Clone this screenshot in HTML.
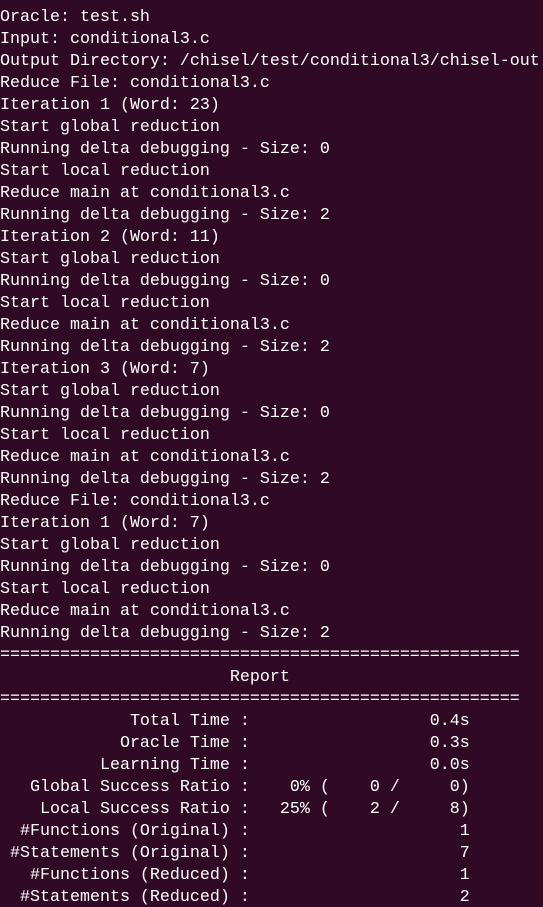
<!DOCTYPE html>
<html><head><meta charset="utf-8"><style>
html,body{margin:0;padding:0;background:#300a24;width:543px;height:907px;overflow:hidden}
pre{margin:-15px 0 0 0;font-family:"Liberation Mono",monospace;font-size:16.67px;line-height:22px;color:#ffffff;white-space:pre}
</style></head><body><pre>Source: /chisel/test/conditional3/
Oracle: test.sh
Input: conditional3.c
Output Directory: /chisel/test/conditional3/chisel-out
Reduce File: conditional3.c
Iteration 1 (Word: 23)
Start global reduction
Running delta debugging - Size: 0
Start local reduction
Reduce main at conditional3.c
Running delta debugging - Size: 2
Iteration 2 (Word: 11)
Start global reduction
Running delta debugging - Size: 0
Start local reduction
Reduce main at conditional3.c
Running delta debugging - Size: 2
Iteration 3 (Word: 7)
Start global reduction
Running delta debugging - Size: 0
Start local reduction
Reduce main at conditional3.c
Running delta debugging - Size: 2
Reduce File: conditional3.c
Iteration 1 (Word: 7)
Start global reduction
Running delta debugging - Size: 0
Start local reduction
Reduce main at conditional3.c
Running delta debugging - Size: 2
====================================================
                       Report
====================================================
             Total Time :                  0.4s
            Oracle Time :                  0.3s
          Learning Time :                  0.0s
   Global Success Ratio :    0% (    0 /     0)
    Local Success Ratio :   25% (    2 /     8)
  #Functions (Original) :                     1
 #Statements (Original) :                     7
   #Functions (Reduced) :                     1
  #Statements (Reduced) :                     2
</pre></body></html>
